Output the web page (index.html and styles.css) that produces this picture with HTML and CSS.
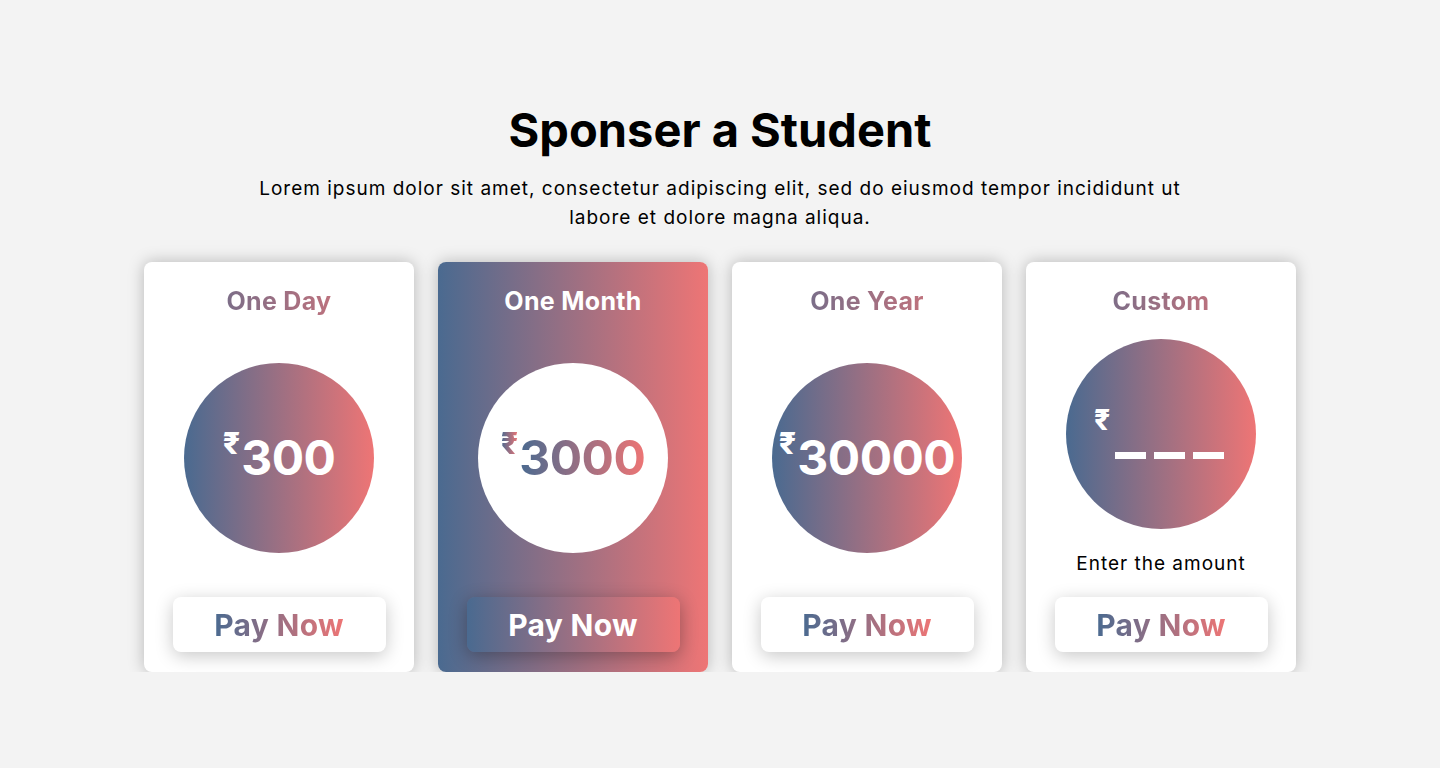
FILE: index.html
```html
<!DOCTYPE html>
<html lang="en">
<head>
    <meta charset="UTF-8">
    <meta name="viewport" content="width=device-width, initial-scale=1.0">
    <title>Sponser a Student</title>
    <link rel="stylesheet" href="styles.css">
</head>
<body>
    <section class="sponsor">
        <h1>Sponser a Student</h1>
        <p class="intro">Lorem ipsum dolor sit amet, consectetur adipiscing elit, sed do eiusmod tempor incididunt ut labore et dolore magna aliqua.</p>

        <div class="plans">
            <div class="plan">
                <h3 class="plan-title">One Day</h3>
                <div class="price"><span class="rupee">₹</span><span class="amount">300</span></div>
                <button class="pay-btn"><span>Pay Now</span></button>
            </div>

            <div class="plan featured">
                <h3 class="plan-title">One Month</h3>
                <div class="price"><span class="rupee">₹</span><span class="amount">3000</span></div>
                <button class="pay-btn"><span>Pay Now</span></button>
            </div>

            <div class="plan">
                <h3 class="plan-title">One Year</h3>
                <div class="price"><span class="rupee">₹</span><span class="amount">30000</span></div>
                <button class="pay-btn"><span>Pay Now</span></button>
            </div>

            <div class="plan custom">
                <h3 class="plan-title">Custom</h3>
                <div class="price custom-price">
                    <span class="rupee">₹</span>
                    <div class="blanks"><i></i><i></i><i></i></div>
                </div>
                <p class="hint">Enter the amount</p>
                <button class="pay-btn"><span>Pay Now</span></button>
            </div>
        </div>
    </section>
</body>
</html>
```

FILE: styles.css
```css
body {
    margin: 0;
    padding: 0;
    background: #f3f3f3;
    color: #000;
    font-family: Inter, "Open Sans", sans-serif;
}

.sponsor {
    display: flex;
    flex-direction: column;
    align-items: center;
    padding-top: 100px;
}

.sponsor h1 {
    margin: 0;
    font-size: 47px;
    line-height: 60px;
    font-weight: 700;
}

.intro {
    margin: 14px 0 0;
    max-width: 940px;
    text-align: center;
    font-size: 19px;
    line-height: 29px;
    letter-spacing: 1px;
}

.plans {
    display: flex;
    gap: 24px;
    margin-top: 30px;
}

.plan {
    width: 270px;
    height: 410px;
    box-sizing: border-box;
    padding: 24px 0 20px;
    background: #fff;
    border-radius: 8px;
    box-shadow: 0 0 16px rgba(0, 0, 0, 0.25);
    display: flex;
    flex-direction: column;
    align-items: center;
}

.plan-title {
    margin: 0;
    width: 100%;
    text-align: center;
    font-size: 25px;
    line-height: 30px;
    font-weight: 700;
    letter-spacing: 0.3px;
    background: linear-gradient(to right, #4a6a90, #ee7575);
    -webkit-background-clip: text;
    background-clip: text;
    color: transparent;
}

.price {
    margin-top: 47px;
    width: 190px;
    height: 190px;
    border-radius: 50%;
    background: linear-gradient(to right, #4a6a90, #ee7575);
    color: #fff;
    display: flex;
    justify-content: center;
    align-items: center;
}

.rupee {
    font-size: 30px;
    font-weight: 800;
    align-self: center;
    margin-top: -30px;
    margin-right: 1px;
}

.amount {
    font-size: 48px;
    font-weight: 700;
    line-height: 1;
    letter-spacing: -0.5px;
}

.pay-btn {
    margin-top: auto;
    width: 213px;
    height: 55px;
    border: none;
    border-radius: 8px;
    background: #fff;
    box-shadow: 0 4px 18px rgba(0, 0, 0, 0.22);
    font-family: inherit;
    font-size: 30px;
    font-weight: 700;
    letter-spacing: 0.3px;
    cursor: pointer;
    padding: 0;
}

.pay-btn span {
    background: linear-gradient(to right, #4a6a90, #ee7575);
    -webkit-background-clip: text;
    background-clip: text;
    color: transparent;
}

/* middle card, colours flipped */
.featured {
    background: linear-gradient(to right, #4a6a90, #ee7575);
}

.featured .plan-title {
    background: none;
    color: #fff;
}

.featured .price {
    background: #fff;
}

.featured .price span {
    background: linear-gradient(to right, #4a6a90, #ee7575);
    -webkit-background-clip: text;
    background-clip: text;
    color: transparent;
}

.featured .rupee {
    background: linear-gradient(to right, #b86a80, #e06a74);
}

.featured .pay-btn {
    background: linear-gradient(to right, #4a6a90, #ee7575);
    box-shadow: 0 4px 18px rgba(0, 0, 0, 0.3);
}

.featured .pay-btn span {
    background: none;
    color: #fff;
}

/* custom amount card */
.custom .price {
    margin-top: 23px;
}

.custom-price {
    flex-direction: column;
    align-items: flex-start;
    justify-content: flex-start;
    box-sizing: border-box;
    padding: 67px 0 0 28px;
}

.custom-price .rupee {
    align-self: flex-start;
    margin: 0;
    font-size: 28px;
    line-height: 28px;
}

.blanks {
    display: flex;
    gap: 8px;
    margin: 18px 0 0 21px;
}

.blanks i {
    display: block;
    width: 31px;
    height: 7px;
    background: #fff;
}

.hint {
    margin: 21px 0 0;
    font-size: 19px;
    line-height: 27px;
    letter-spacing: 1px;
}
```
